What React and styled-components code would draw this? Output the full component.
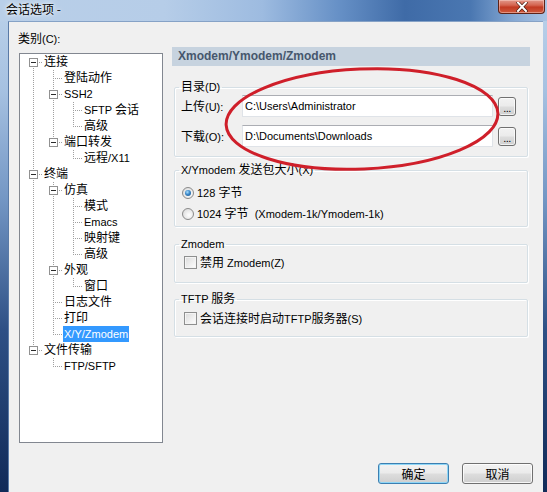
import React from 'react';
import styled, { createGlobalStyle } from 'styled-components';

const GlobalStyle = createGlobalStyle`
  html, body { margin: 0; padding: 0; }
  body {
    width: 547px; height: 492px; overflow: hidden;
    font-family: "Liberation Sans", "Noto Sans CJK SC", sans-serif;
    font-size: 11px; color: #000;
  }
`;

const Window = styled.div`
  width: 547px; height: 492px;
  display: flex; flex-direction: column;
  overflow: hidden;
  background: linear-gradient(to bottom, #bcd2ea 0px, #a6c1e1 90px, #7396c4 200px, #2e5085 330px, #112a58 492px);
`;

const TitleBar = styled.div`
  flex: none; height: 21px;
  display: flex; align-items: flex-start; justify-content: space-between;
  background: linear-gradient(to right, #b9cfe8 0%, #b6cde8 30%, #9dbbe0 48%, #6690c6 62%, #3f6ba7 74%, #4a77b1 86%, #86a9d4 94%, #a9c4e4 100%);
`;

const Title = styled.div`
  margin: 1px 0 0 6px;
  font-family: "Noto Sans CJK SC", sans-serif;
  font-size: 12px; line-height: 16px;
  text-shadow: 0 0 6px rgba(255,255,255,0.9), 0 0 3px rgba(255,255,255,0.9);
`;

const CloseBtn = styled.div`
  width: 45px; height: 13px; margin-right: 2px;
  display: flex; align-items: center; justify-content: center;
  border: 1px solid #5e2318; border-top: none;
  border-radius: 0 0 4px 4px;
  background: linear-gradient(to bottom, #e2988a 0%, #d56550 40%, #c23a22 55%, #cf5a3e 100%);
  box-shadow: inset 0 0 0 1px rgba(255,220,210,0.45);
`;

const Content = styled.div`
  position: relative;
  flex: 1;
  margin: 0 4px 0 8px;
  background: #f0f0f0;
  border-top: 1px solid #86a2c6;
  border-left: 1px solid #5a7aa6;
  display: flex; flex-direction: column;
`;

const Main = styled.div`
  display: flex;
  padding: 9px 0 0 9px;
`;

const LeftCol = styled.div`
  width: 145px;
  display: flex; flex-direction: column;
`;

const CategoryLabel = styled.div`
  height: 16px; line-height: 16px; margin-bottom: 6px;
`;

const Tree = styled.div`
  margin-left: 1px;
  width: 144px; height: 390px; box-sizing: border-box;
  border: 1px solid #828790;
  background: #fff;
  padding-left: 3px;
`;

const TreeRow = styled.div`
  display: flex; align-items: center;
  height: 16px;
`;

const LineSvg = styled.svg`
  flex: none; display: block;
  width: 20px; height: 16px;
`;

const TreeLabel = styled.span`
  white-space: nowrap;
  height: 16px;
  line-height: 16px;
  padding: 0 1px;
  background: ${p => (p.$selected ? '#3399ff' : 'transparent')};
  color: ${p => (p.$selected ? '#fff' : '#000')};
`;

const RightCol = styled.div`
  margin-left: 9px;
  width: 358px;
  padding-top: 16px;
  display: flex; flex-direction: column;
`;

const Header = styled.div`
  height: 19px; line-height: 19px;
  padding-left: 6px;
  background: #c7d3df;
  color: #46576d;
  font-weight: bold; font-size: 12px;
`;

const Group = styled.fieldset`
  margin: ${p => p.$top}px 2px 0 2px;
  padding: ${p => p.$pt}px 6px ${p => p.$pb}px 6px;
  min-width: 0;
  border: 1px solid #d5dfe5;
  border-radius: 2px;
  box-shadow: inset 1px 1px 0 #fff, 1px 1px 0 #fff;
`;

const Legend = styled.legend`
  padding: 0 2px; margin-left: -2px;
  height: 16px;
  line-height: 16px;
`;

const FieldRow = styled.div`
  display: flex; align-items: center;
  height: 22px;
  & + & { margin-top: 8px; }
`;

const FieldLabel = styled.span`
  width: 61px; flex: none;
`;

const TextBox = styled.input`
  width: 251px; height: 22px; box-sizing: border-box;
  border: 1px solid #dfe3e8; border-top-color: #abadb3;
  background: #fff;
  padding: 0 2px;
  font: inherit; color: #000;
  outline: none;
`;

const DotsBtn = styled.div`
  margin-left: 5px;
  width: 18px; height: 19px; box-sizing: border-box;
  border: 1px solid #707070; border-radius: 3px;
  background: linear-gradient(to bottom, #f2f2f2 0%, #ebebeb 48%, #dddddd 52%, #cfcfcf 100%);
  box-shadow: inset 0 0 0 1px rgba(255,255,255,0.7);
  display: flex; align-items: flex-end; justify-content: center;
  font-size: 11px; line-height: 13px; letter-spacing: -0.5px;
`;

const OptionRow = styled.div`
  display: flex; align-items: center;
  height: ${p => p.$h}px;
  white-space: pre;
`;

const Radio = styled.span`
  flex: none;
  width: 12px; height: 12px; box-sizing: border-box;
  margin: 0 3px 0 1px;
  border-radius: 50%;
  border: 1px solid #8a8a8a;
  background: radial-gradient(circle at 60% 60%, #ffffff 0%, #e6e6e6 60%, #d0d0d0 100%);
  display: flex; align-items: center; justify-content: center;
  &::after {
    content: '';
    display: ${p => (p.$checked ? 'block' : 'none')};
    width: 6px; height: 6px; border-radius: 50%;
    background: radial-gradient(circle at 40% 35%, #a9e0ff 0%, #3b87c8 45%, #174f86 100%);
  }
`;

const Check = styled.span`
  flex: none;
  width: 13px; height: 13px; box-sizing: border-box;
  margin: 0 3px 0 3px;
  border: 1px solid #8e8f8f;
  background: linear-gradient(135deg, #dadada 0%, #f4f4f4 70%, #ffffff 100%);
  box-shadow: inset 0 0 0 1px #f4f4f4;
`;

const Footer = styled.div`
  margin-top: 20px;
  display: flex; justify-content: flex-end; gap: 13px;
  padding-right: 10px;
`;

const Button = styled.div`
  width: 71px; height: 21px; box-sizing: border-box;
  border: 1px solid ${p => (p.$default ? '#3c7fb1' : '#707070')};
  border-radius: 3px;
  background: linear-gradient(to bottom, #f2f2f2 0%, #ebebeb 48%, #dddddd 52%, #cfcfcf 100%);
  box-shadow: inset 0 0 0 1px ${p => (p.$default ? '#8fd6f6' : 'rgba(255,255,255,0.8)')};
  display: flex; align-items: center; justify-content: center;
`;

const Annotation = styled.svg`
  position: absolute;
  left: 211px; top: 44px;
  width: 295px; height: 112px;
  pointer-events: none;
  overflow: visible;
`;

const Han = styled.span`
  font-family: "Noto Sans CJK SC", sans-serif;
  font-size: 12px;
  line-height: 1;
`;

const T = ({ children }) => {
  const parts = String(children).split(/([\u2E80-\u9FFF\uFF00-\uFFEF]+)/);
  return parts.map((p, i) => (i % 2 ? <Han key={i}>{p}</Han> : p));
};

const treeData = [
  {
    label: '连接',
    children: [
      { label: '登陆动作' },
      { label: 'SSH2', children: [{ label: 'SFTP 会话' }, { label: '高级' }] },
      { label: '端口转发', children: [{ label: '远程/X11' }] },
    ],
  },
  {
    label: '终端',
    children: [
      { label: '仿真', children: [{ label: '模式' }, { label: 'Emacs' }, { label: '映射键' }, { label: '高级' }] },
      { label: '外观', children: [{ label: '窗口' }] },
      { label: '日志文件' },
      { label: '打印' },
      { label: 'X/Y/Zmodem', selected: true },
    ],
  },
  { label: '文件传输', children: [{ label: 'FTP/SFTP' }] },
];

function flatten(nodes, depth = 0, guides = [], out = []) {
  nodes.forEach((n, i) => {
    const hasNext = i < nodes.length - 1;
    out.push({
      label: n.label,
      selected: !!n.selected,
      guides,
      hasNext,
      hasPrev: depth > 0 || i > 0,
      hasChildren: !!n.children,
    });
    if (n.children) flatten(n.children, depth + 1, [...guides, hasNext], out);
  });
  return out;
}

const rows = flatten(treeData);

const Lines = ({ top, bottom, across, box }) => (
  <LineSvg viewBox="0 0 20 16">
    <g stroke="#a0a0a0" strokeWidth="1" strokeDasharray="1 1" fill="none">
      {top && <line x1="10.5" y1="0" x2="10.5" y2="8" />}
      {bottom && <line x1="10.5" y1="8" x2="10.5" y2="16" />}
      {across && <line x1="10" y1="8.5" x2="20" y2="8.5" />}
    </g>
    {box && (
      <g>
        <rect x="6.5" y="4.5" width="8" height="8" fill="#fff" stroke="#919191" />
        <line x1="8" y1="8.5" x2="13" y2="8.5" stroke="#2b2b2b" />
      </g>
    )}
  </LineSvg>
);

export default function App() {
  return (
    <>
      <GlobalStyle />
      <Window>
        <TitleBar>
          <Title>会话选项 -</Title>
          <CloseBtn>
            <svg width="12" height="10" viewBox="0 0 12 10">
              <path d="M2 0.5 L10 9 M10 0.5 L2 9" stroke="#4a1a10" strokeWidth="3.4" strokeLinecap="square" />
              <path d="M2 0.5 L10 9 M10 0.5 L2 9" stroke="#fff" strokeWidth="2" strokeLinecap="square" />
            </svg>
          </CloseBtn>
        </TitleBar>
        <Content>
          <Main>
            <LeftCol>
              <CategoryLabel><T>类别(C):</T></CategoryLabel>
              <Tree>
                {rows.map((r, idx) => (
                  <TreeRow key={idx}>
                    {r.guides.map((g, i) => (
                      <Lines key={i} top={g} bottom={g} />
                    ))}
                    <Lines top={r.hasPrev} bottom={r.hasNext} across box={r.hasChildren} />
                    <TreeLabel $selected={r.selected}><T>{r.label}</T></TreeLabel>
                  </TreeRow>
                ))}
              </Tree>
            </LeftCol>
            <RightCol>
              <Header>Xmodem/Ymodem/Zmodem</Header>
              <Group $top={13} $pt={0} $pb={9}>
                <Legend><T>目录(D)</T></Legend>
                <FieldRow>
                  <FieldLabel><T>上传(U):</T></FieldLabel>
                  <TextBox readOnly value={'C:\\Users\\Administrator'} />
                  <DotsBtn>...</DotsBtn>
                </FieldRow>
                <FieldRow>
                  <FieldLabel><T>下载(O):</T></FieldLabel>
                  <TextBox readOnly value={'D:\\Documents\\Downloads'} />
                  <DotsBtn>...</DotsBtn>
                </FieldRow>
              </Group>
              <Group $top={5} $pt={4} $pb={2}>
                <Legend><T>X/Ymodem 发送包大小(X)</T></Legend>
                <OptionRow $h={21}>
                  <Radio $checked />
                  <span><T>128 字节</T></span>
                </OptionRow>
                <OptionRow $h={21}>
                  <Radio />
                  <span><T>1024 字节  (Xmodem-1k/Ymodem-1k)</T></span>
                </OptionRow>
              </Group>
              <Group $top={9} $pt={0} $pb={9}>
                <Legend>Zmodem</Legend>
                <OptionRow $h={21}>
                  <Check />
                  <span><T>禁用 Zmodem(Z)</T></span>
                </OptionRow>
              </Group>
              <Group $top={8} $pt={0} $pb={7}>
                <Legend><T>TFTP 服务</T></Legend>
                <OptionRow $h={22}>
                  <Check />
                  <span><T>会话连接时启动TFTP服务器(S)</T></span>
                </OptionRow>
              </Group>
            </RightCol>
          </Main>
          <Footer>
            <Button $default><T>确定</T></Button>
            <Button><T>取消</T></Button>
          </Footer>
          <Annotation viewBox="0 0 295 112">
            <ellipse cx="142" cy="53" rx="136" ry="50" fill="none" stroke="#cf1f2a" strokeWidth="3" transform="rotate(-2.5 142 53)" />
          </Annotation>
        </Content>
      </Window>
    </>
  );
}
